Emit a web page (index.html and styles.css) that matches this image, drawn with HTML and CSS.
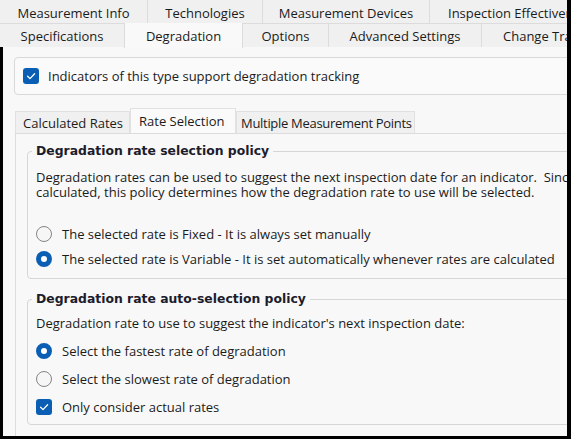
FILE: index.html
```html
<!DOCTYPE html>
<html>
<head>
<meta charset="utf-8">
<link rel="stylesheet" href="styles.css">
</head>
<body>
<div class="screen">
  <div class="tabrow row1">
    <div class="tab w148">Measurement Info</div>
    <div class="tab w115">Technologies</div>
    <div class="tab w167">Measurement Devices</div>
    <div class="tab rest pl18">Inspection Effectiveness</div>
  </div>
  <div class="tabrow row2">
    <div class="tab w125">Specifications</div>
    <div class="tab w118 selected">Degradation</div>
    <div class="tab w86">Options</div>
    <div class="tab w153">Advanced Settings</div>
    <div class="tab rest pl21">Change Tracking</div>
  </div>
  <div class="panel">
    <div class="trackbox">
      <span class="check"><svg viewBox="0 0 16 16" width="16" height="16"><path d="M4.6 8.3 L7 10.6 L11.6 5.8" fill="none" stroke="#fff" stroke-width="1.3" stroke-linecap="round" stroke-linejoin="round"/></svg></span>
      <span class="label">Indicators of this type support degradation tracking</span>
    </div>
    <div class="subtabs">
      <div class="subtab">Calculated Rates</div>
      <div class="subtab selected">Rate Selection</div>
      <div class="subtab">Multiple Measurement Points</div>
    </div>
    <div class="subpanel">
      <fieldset class="group g1">
        <legend>Degradation rate selection policy</legend>
        <p class="para">Degradation rates can be used to suggest the next inspection date for an indicator.&nbsp; Since rates are periodically re-</p>
        <p class="para">calculated, this policy determines how the degradation rate to use will be selected.</p>
        <div class="opts o1">
          <div class="opt"><span class="radio"></span><span class="label">The selected rate is Fixed - It is always set manually</span></div>
          <div class="opt"><span class="radio on"></span><span class="label">The selected rate is Variable - It is set automatically whenever rates are calculated</span></div>
        </div>
      </fieldset>
      <fieldset class="group g2">
        <legend>Degradation rate auto-selection policy</legend>
        <p class="para">Degradation rate to use to suggest the indicator's next inspection date:</p>
        <div class="opts o2">
          <div class="opt"><span class="radio on"></span><span class="label">Select the fastest rate of degradation</span></div>
          <div class="opt"><span class="radio"></span><span class="label">Select the slowest rate of degradation</span></div>
          <div class="opt"><span class="check"><svg viewBox="0 0 16 16" width="16" height="16"><path d="M4.6 8.3 L7 10.6 L11.6 5.8" fill="none" stroke="#fff" stroke-width="1.3" stroke-linecap="round" stroke-linejoin="round"/></svg></span><span class="label">Only consider actual rates</span></div>
        </div>
      </fieldset>
    </div>
  </div>
</div>
</body>
</html>
```
FILE: styles.css
```css
html, body {
  margin: 0;
  padding: 0;
  background: #000;
}
.screen {
  width: 567px;
  height: 436px;
  overflow: hidden;
  background: #f8f8f8;
  font-family: "Open Sans", "Noto Sans", sans-serif;
  font-size: 13px;
  color: #1b1b1b;
}
.tabrow {
  display: flex;
  height: 23px;
  background: #f0f0f0;
  border-bottom: 1px solid #dcdcdc;
  white-space: nowrap;
}
.row1 {
  box-sizing: border-box;
  padding-top: 3px;
  height: 24px;
}
.row2 {
  height: 23px;
  border-bottom: none;
}
.tab {
  flex: none;
  display: flex;
  align-items: center;
  justify-content: center;
  border-right: 1px solid #dcdcdc;
  box-sizing: border-box;
}
.row1 .tab { margin-top: -3px; padding-top: 3px; }
.tab.rest {
  flex: 1;
  justify-content: flex-start;
  border-right: none;
  overflow: hidden;
}
.tab.selected {
  background: #f9f9f9;
  margin-top: -1px;
  height: 25px;
  border-left: 1px solid #dcdcdc;
  margin-left: -1px;
}
.w148 { width: 148px; }
.w115 { width: 115px; }
.w167 { width: 167px; }
.w125 { width: 125px; }
.w118 { width: 119px; }
.w86 { width: 86px; }
.w153 { width: 153px; }
.pl18 { padding-left: 18px; }
.pl21 { padding-left: 21px; }

.panel {
  padding: 10px 0 0 11px;
  border-left: 3px solid #000;
  background: #f8f8f8;
  height: 400px;
}
.trackbox {
  width: 620px;
  height: 36px;
  border: 1px solid #d9d9d9;
  border-radius: 4px;
  background: #fafafa;
  display: flex;
  align-items: center;
  gap: 9px;
  padding-left: 8px;
  white-space: nowrap;
}
.check {
  flex: none;
  width: 16px;
  height: 16px;
  border-radius: 3px;
  background: #0a5fb4;
  display: flex;
}
.subtabs {
  display: flex;
  margin: 13px 0 0 1px;
  height: 25px;
  align-items: flex-end;
  white-space: nowrap;
}
.subtab {
  height: 22px;
  box-sizing: border-box;
  padding: 0 7px;
  display: flex;
  align-items: center;
  background: #f0f0f0;
  border: 1px solid #e1e1e1;
  border-bottom: none;
}
.subtab.selected {
  height: 25px;
  background: #fafafa;
  padding: 0 8px;
}
.subtabs .subtab:first-child { width: 115px; }
.subtabs .subtab.selected { width: 106px; }
.subtabs .subtab:last-child {
  width: 179px;
  padding-left: 4px;
  letter-spacing: -0.3px;
}

.subpanel {
  width: 640px;
  height: 300px;
  border-top: 1px solid #dcdcdc;
  border-left: 1px solid #dcdcdc;
  margin-left: 1px;
  background: #f8f8f8;
  padding: 9px 0 0 11px;
}
.group {
  margin: 0;
  border: 1px solid #d6d6d6;
  border-radius: 4px;
  padding: 0 0 0 8px;
  width: 580px;
  white-space: nowrap;
}
.group legend {
  font-family: "DejaVu Sans", sans-serif;
  font-weight: bold;
  font-size: 12.4px;
  line-height: 16px;
  color: #1c1c2c;
  padding: 0 4px;
  margin-left: -4px;
}
.para {
  margin: 0;
  line-height: 15px;
}
.g1 .para:first-of-type { margin-top: 11px; }
.g1 { padding-bottom: 7px; }
.g2 { margin-top: 12px; padding-bottom: 4px; }
.g2 .para { margin-top: 9px; }
.opts { display: flex; flex-direction: column; }
.o1 { margin-top: 21px; }
.o1 .opt { height: 25px; }
.o2 { margin-top: 6px; }
.o2 .opt { height: 28px; }
.o2 .opt:last-child { height: 27px; }
.opt {
  display: flex;
  align-items: center;
  gap: 10px;
}
.radio {
  flex: none;
  width: 16px;
  height: 16px;
  box-sizing: border-box;
  border-radius: 50%;
  border: 1px solid #858585;
  background: #f6f6f6;
}
.radio.on {
  border: 5px solid #0a5fb4;
  background: #fff;
}
```
